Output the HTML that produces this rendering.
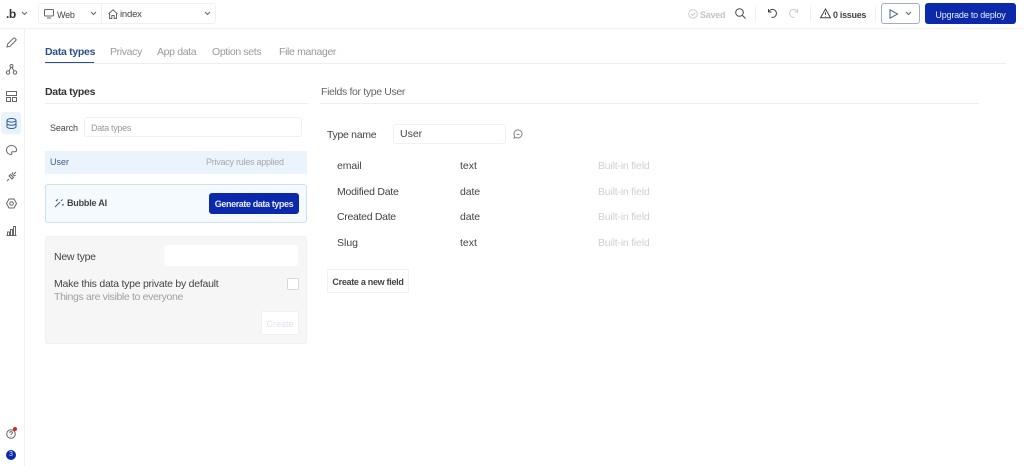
<!DOCTYPE html>
<html><head><meta charset="utf-8"><style>
html,body{margin:0;padding:0;background:#fff}
body{width:1024px;height:466px;overflow:hidden;position:relative;font-family:"Liberation Sans",sans-serif;color:#444}
.t{position:absolute;white-space:nowrap;line-height:14px;font-size:10.5px}
.b{position:absolute;box-sizing:border-box}
svg{position:absolute;overflow:visible;fill:none;stroke:#666;stroke-width:1}
.tab{top:45px;font-size:10.5px;letter-spacing:-.35px;color:#999}
.r{font-size:10.5px}
.bf{left:598px;font-size:10.5px;letter-spacing:-.2px;color:#d0d0d0}
</style></head><body>
<div class="b" style="left:0;top:28px;width:1024px;height:1px;background:#f1f1f1"></div>
<div class="b" style="left:24px;top:28px;width:1px;height:438px;background:#f1f1f1"></div>

<!-- top bar -->
<div class="t" style="left:6px;top:7px;font-size:12px;font-weight:bold;letter-spacing:-.5px;color:#333">.b</div>
<svg style="left:21px;top:11px" width="7" height="5"><path d="M1 1l2.500 2.500L6 1"/></svg>
<div class="b" style="left:38px;top:3px;width:178px;height:21px;border:1px solid #f0f0f0;border-radius:3px"></div>
<div class="b" style="left:101px;top:3px;width:1px;height:21px;background:#f0f0f0"></div>
<svg style="left:44px;top:9px" width="11" height="10"><rect x=".5" y=".5" width="9" height="6.500" rx="1"/><path d="M3 9h4"/></svg>
<div class="t" style="left:57px;top:8px;font-size:9px;letter-spacing:-.2px">Web</div>
<svg style="left:90px;top:11px" width="7" height="5"><path d="M1 1l2.500 2.500L6 1"/></svg>
<svg style="left:108px;top:9px" width="10" height="10"><path d="M.5 5L5 .8 9.500 5M1.500 4.500V9.500h2.300V6.500h2.400v3h2.300V4.500"/></svg>
<div class="t" style="left:120px;top:8px;font-size:9.500px;letter-spacing:-.2px">index</div>
<svg style="left:204px;top:11px" width="7" height="5"><path d="M1 1l2.500 2.500L6 1"/></svg>

<svg style="left:688px;top:9px;stroke:#ccc" width="10" height="10"><circle cx="5" cy="5" r="4.300"/><path d="M3 5l1.500 1.500L7 3.700"/></svg>
<div class="t" style="left:700px;top:8px;font-size:9px;letter-spacing:-.25px;color:#c4c4c4;font-weight:bold">Saved</div>
<svg style="left:735px;top:8px;stroke:#444" width="11" height="11"><circle cx="4.500" cy="4.500" r="3.800"/><path d="M7.500 7.500l3 3"/></svg>
<div class="b" style="left:755px;top:6px;width:1px;height:16px;background:#f1f1f1"></div>
<svg style="left:767px;top:8px;stroke:#444" width="10" height="10"><path d="M1.500 1v3h3M1.700 4A4 4 0 1 1 4.500 9.300"/></svg>
<svg style="left:789px;top:8px;stroke:#ccc" width="10" height="10"><path d="M8.500 1v3h-3M8.300 4A4 4 0 1 0 5.500 9.300"/></svg>
<div class="b" style="left:810px;top:6px;width:1px;height:16px;background:#f1f1f1"></div>
<svg style="left:820px;top:8px;stroke:#444" width="11" height="11"><path d="M5.500 1L10.500 9.800H.5zM5.500 4.200v2.800M5.500 8v.5"/></svg>
<div class="t" style="left:833px;top:8px;font-size:9px;letter-spacing:-.3px;font-weight:bold;color:#444">0 issues</div>
<div class="b" style="left:875px;top:6px;width:1px;height:16px;background:#f1f1f1"></div>
<div class="b" style="left:881px;top:3px;width:39px;height:21px;border:1px solid #9db0c6;border-radius:3px"></div>
<svg style="left:889px;top:9px;stroke:#3b5f8a" width="10" height="10"><path d="M1 .8L8.500 5 1 9.200z"/></svg>
<svg style="left:905px;top:11px" width="7" height="5"><path d="M1 1l2.500 2.500L6 1"/></svg>
<div class="b" style="left:925px;top:3px;width:91px;height:21px;background:#0c29ab;border-radius:3px"></div>
<div class="t" style="left:925px;top:8px;width:91px;text-align:center;font-size:9px;letter-spacing:-.2px;color:#e8ecfa">Upgrade to deploy</div>

<!-- sidebar -->
<div class="b" style="left:1px;top:112px;width:20px;height:22px;background:#eaf2fb;border-radius:3px"></div>
<svg style="left:6px;top:37px" width="11" height="11"><path d="M1 10l.7-3L7.500 1.200a1 1 0 0 1 1.400 0l.9.9a1 1 0 0 1 0 1.400L4 9.300z"/></svg>
<svg style="left:6px;top:64px" width="11" height="11"><circle cx="5.500" cy="2" r="1.500"/><circle cx="2" cy="8.500" r="1.700"/><circle cx="9" cy="8.500" r="1.700"/><path d="M5 3.500L3 7M6 3.500L8 7"/></svg>
<svg style="left:6px;top:91px" width="11" height="11"><rect x=".5" y=".5" width="10" height="4"/><rect x=".5" y="6.500" width="4" height="4"/><rect x="6.500" y="6.500" width="4" height="4"/></svg>
<svg style="left:6px;top:118px;stroke:#2f5d9a" width="11" height="11"><ellipse cx="5.500" cy="2.300" rx="4.500" ry="1.800"/><path d="M1 2.300v6.400c0 1 2 1.800 4.500 1.800s4.500-.8 4.500-1.800V2.300M1 5.500c0 1 2 1.800 4.500 1.800S10 6.500 10 5.500"/></svg>
<svg style="left:6px;top:145px" width="11" height="10"><path d="M5.500.5C2.500.5.500 2.500.5 5s2 4.500 4.500 4.500c1 0 1-.8.700-1.400-.3-.7 0-1.300 1-1.300H9c1 0 1.500-.8 1.500-1.800C10.500 2.500 8.500.5 5.500.5z"/></svg>
<svg style="left:6px;top:171px" width="11" height="11"><path d="M1 10l2-2M3 5l3 3 1.500-1.500-3-3zM6 2.500L8.500 5M10 1L8 3M9.500 4L8.500 5M7 1.500L6 2.500"/></svg>
<svg style="left:6px;top:198px" width="11" height="11"><path d="M3 1h5l2.500 4.500L8 10H3L.5 5.500z"/><circle cx="5.500" cy="5.500" r="1.800"/></svg>
<svg style="left:6px;top:225px" width="11" height="11"><path d="M.5 10.500h10M1.500 10.500V7h2v3.500M4.500 10.500V4.500h2v6M7.500 10.500V1.500h2v9"/></svg>
<svg style="left:6px;top:428px" width="11" height="11"><circle cx="5" cy="6" r="4.300"/><path d="M3.700 4.800c.2-1.700 2.800-1.500 2.700 0 0 1-1.400 1-1.400 2.200M5 8v.5"/></svg>
<div class="b" style="left:13px;top:427px;width:4px;height:4px;border-radius:50%;background:#d9252c"></div>
<div class="b" style="left:6px;top:450px;width:10px;height:10px;border-radius:50%;background:#0c29ab"></div>
<div class="t" style="left:6px;top:448px;width:10px;text-align:center;font-size:7px;color:#dfe5fa">3</div>

<!-- tabs -->
<div class="t" style="left:45px;top:45px;font-size:10.5px;letter-spacing:-.3px;font-weight:bold;color:#2c4f8c">Data types</div>
<div class="b" style="left:45px;top:62px;width:49px;height:1.500px;background:#2c4f8c"></div>
<div class="t tab" style="left:110px">Privacy</div>
<div class="t tab" style="left:157px">App data</div>
<div class="t tab" style="left:212px">Option sets</div>
<div class="t tab" style="left:279px">File manager</div>
<div class="b" style="left:45px;top:63px;width:961px;height:1px;background:#eee"></div>

<!-- left col -->
<div class="t" style="left:45px;top:85px;font-size:10.5px;letter-spacing:-.3px;font-weight:bold;color:#333">Data types</div>
<div class="b" style="left:45px;top:103px;width:263px;height:1px;background:#eee"></div>
<div class="t" style="left:50px;top:121px;font-size:9px;letter-spacing:-.1px;color:#444">Search</div>
<div class="b" style="left:84px;top:117px;width:218px;height:20px;border:1px solid #f0f0f0;border-radius:3px"></div>
<div class="t" style="left:91px;top:121px;font-size:9px;letter-spacing:-.3px;color:#999">Data types</div>
<div class="b" style="left:45px;top:151px;width:262px;height:23px;background:#ebf3fc"></div>
<div class="t" style="left:50px;top:155px;font-size:9px;color:#3f5f8a">User</div>
<div class="t" style="left:206px;top:155px;font-size:9px;letter-spacing:-.25px;color:#a5a8ad">Privacy rules applied</div>
<div class="b" style="left:45px;top:184px;width:262px;height:39px;background:#f5fafe;border:1px solid #cfe0ee;border-radius:3px"></div>
<svg style="left:54px;top:198px;stroke:#3a5a9a" width="10" height="10"><path d="M1 9L6 4M7 3L8.500 1.500M2 2l.8 1.200M3.500 1l-.5 1.500M8 6.500l.8 1M9.500 6l-.8 1.500"/></svg>
<div class="t" style="left:67px;top:196px;font-size:9px;letter-spacing:-.2px;font-weight:bold;color:#444">Bubble AI</div>
<div class="b" style="left:209px;top:193px;width:90px;height:21px;background:#0c29ab;border-radius:3px"></div>
<div class="t" style="left:209px;top:197px;width:90px;text-align:center;font-size:9px;letter-spacing:-.4px;font-weight:bold;color:#e8ecfa">Generate data types</div>

<div class="b" style="left:45px;top:236px;width:262px;height:108px;background:#f6f6f6;border:1px solid #f0f0f0;border-radius:3px"></div>
<div class="t" style="left:54px;top:250px;font-size:10.5px;letter-spacing:-.25px;color:#444">New type</div>
<div class="b" style="left:164px;top:245px;width:134px;height:21px;background:#fff;border-radius:3px"></div>
<div class="t" style="left:54px;top:277px;font-size:10.5px;letter-spacing:-.25px;color:#444">Make this data type private by default</div>
<div class="t" style="left:54px;top:290px;font-size:10.5px;letter-spacing:-.35px;color:#a0a0a0">Things are visible to everyone</div>
<div class="b" style="left:287px;top:278px;width:12px;height:12px;background:#fff;border:1px solid #d8d8d8;border-radius:2px"></div>
<div class="b" style="left:261px;top:311px;width:38px;height:24px;background:#fff;border:1px solid #f0f0f0;border-radius:2px"></div>
<div class="t" style="left:261px;top:317px;width:38px;text-align:center;font-size:9px;color:#dde3ee">Create</div>

<!-- right col -->
<div class="t" style="left:321px;top:85px;font-size:10.5px;letter-spacing:-.35px;color:#666">Fields for type User</div>
<div class="b" style="left:320px;top:103px;width:659px;height:1px;background:#eee"></div>
<div class="t" style="left:327px;top:128px;font-size:10.5px;letter-spacing:-.3px;color:#444">Type name</div>
<div class="b" style="left:393px;top:124px;width:113px;height:20px;border:1px solid #f0f0f0;border-radius:3px"></div>
<div class="t" style="left:400px;top:127px;font-size:10.5px;color:#444">User</div>
<svg style="left:513px;top:130px;stroke:#888" width="10" height="9"><path d="M1 8l.7-1.800A4 4 0 1 1 3.200 7.500zM3.500 4.500h3"/></svg>

<div class="t r" style="left:337px;top:159px;letter-spacing:-.1px">email</div>
<div class="t r" style="left:460px;top:159px">text</div>
<div class="t bf" style="top:159px">Built-in field</div>
<div class="t r" style="left:337px;top:185px;letter-spacing:-.25px">Modified Date</div>
<div class="t r" style="left:460px;top:185px;letter-spacing:-.1px">date</div>
<div class="t bf" style="top:185px">Built-in field</div>
<div class="t r" style="left:337px;top:210px;letter-spacing:-.3px">Created Date</div>
<div class="t r" style="left:460px;top:210px;letter-spacing:-.1px">date</div>
<div class="t bf" style="top:210px">Built-in field</div>
<div class="t r" style="left:337px;top:236px">Slug</div>
<div class="t r" style="left:460px;top:236px">text</div>
<div class="t bf" style="top:236px">Built-in field</div>

<div class="b" style="left:327px;top:269px;width:82px;height:24px;border:1px solid #f0f0f0;border-radius:2px"></div>
<div class="t" style="left:327px;top:275px;width:82px;text-align:center;font-size:9px;letter-spacing:-.3px;font-weight:bold;color:#444">Create a new field</div>
</body></html>
